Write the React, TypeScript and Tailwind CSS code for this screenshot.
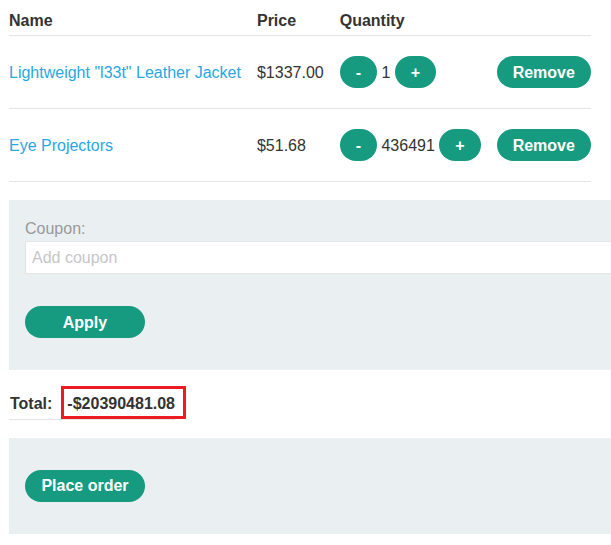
import React from "react";

type Item = { name: string; price: string; quantity: number };

const items: Item[] = [
  { name: 'Lightweight "l33t" Leather Jacket', price: "$1337.00", quantity: 1 },
  { name: "Eye Projectors", price: "$51.68", quantity: 436491 },
];

function PillButton({
  children,
  className = "pt-0.5",
  label,
}: {
  children: React.ReactNode;
  className?: string;
  label?: string;
}) {
  return (
    <button
      type="button"
      aria-label={label}
      className={`h-8 rounded-full bg-[#179b80] px-4 text-center align-middle font-bold text-white ${className}`}
    >
      {children}
    </button>
  );
}

export default function App() {
  return (
    <main className="overflow-hidden bg-white pt-1.5 pl-[9px] font-['Liberation_Sans',Arial,sans-serif] text-base leading-6 text-[#333332]">
      <table className="border-collapse text-left whitespace-nowrap">
        <thead>
          <tr className="h-[29px] border-b border-[#e4e5e5]">
            <th className="pt-0.5 pr-4">Name</th>
            <th className="pt-0.5 pr-4">Price</th>
            <th className="pt-0.5 pr-4">Quantity</th>
            <th aria-label="Actions" />
          </tr>
        </thead>
        <tbody>
          {items.map((item) => (
            <tr key={item.name} className="h-[73px] border-b border-[#e4e5e5]">
              <td className="pt-0.5 pr-4">
                <a href="#" className="text-[#29a7df]">
                  {item.name}
                </a>
              </td>
              <td className="pt-0.5 pr-4">{item.price}</td>
              <td className="pr-4">
                <PillButton label="Decrease quantity">-</PillButton>{" "}
                <span className="inline-block pt-0.5 align-middle">{item.quantity}</span>{" "}
                <PillButton label="Increase quantity">+</PillButton>
              </td>
              <td>
                <PillButton>Remove</PillButton>
              </td>
            </tr>
          ))}
        </tbody>
      </table>

      <form className="mt-[18px] bg-[#eaeff2] pt-[17px] pb-8 pl-4">
        <label htmlFor="coupon" className="block text-[#999]">
          Coupon:
        </label>
        <input
          id="coupon"
          type="text"
          placeholder="Add coupon"
          className="block h-[33px] w-full border border-r-0 border-[#e2e4e5] bg-white px-1.5 pt-0.5 placeholder:text-[#c6c6c8]"
        />
        <PillButton className="mt-8 w-[120px] pt-0.5">Apply</PillButton>
      </form>

      <table className="mt-4 border-collapse text-left font-bold">
        <tbody>
          <tr className="h-[34px] border-b border-[#e4e5e5]">
            <th className="pt-1 pr-[15px] pl-px">Total:</th>
            <td className="relative pt-1">
              -$20390481.08
              <span className="pointer-events-none absolute top-0 -right-[11px] -left-1.5 h-[33px] border-3 border-[#ed1c24]" />
            </td>
          </tr>
        </tbody>
      </table>

      <section className="mt-[18px] bg-[#eaeff2] py-8 pl-4">
        <PillButton className="block w-[120px]">Place order</PillButton>
      </section>
    </main>
  );
}
